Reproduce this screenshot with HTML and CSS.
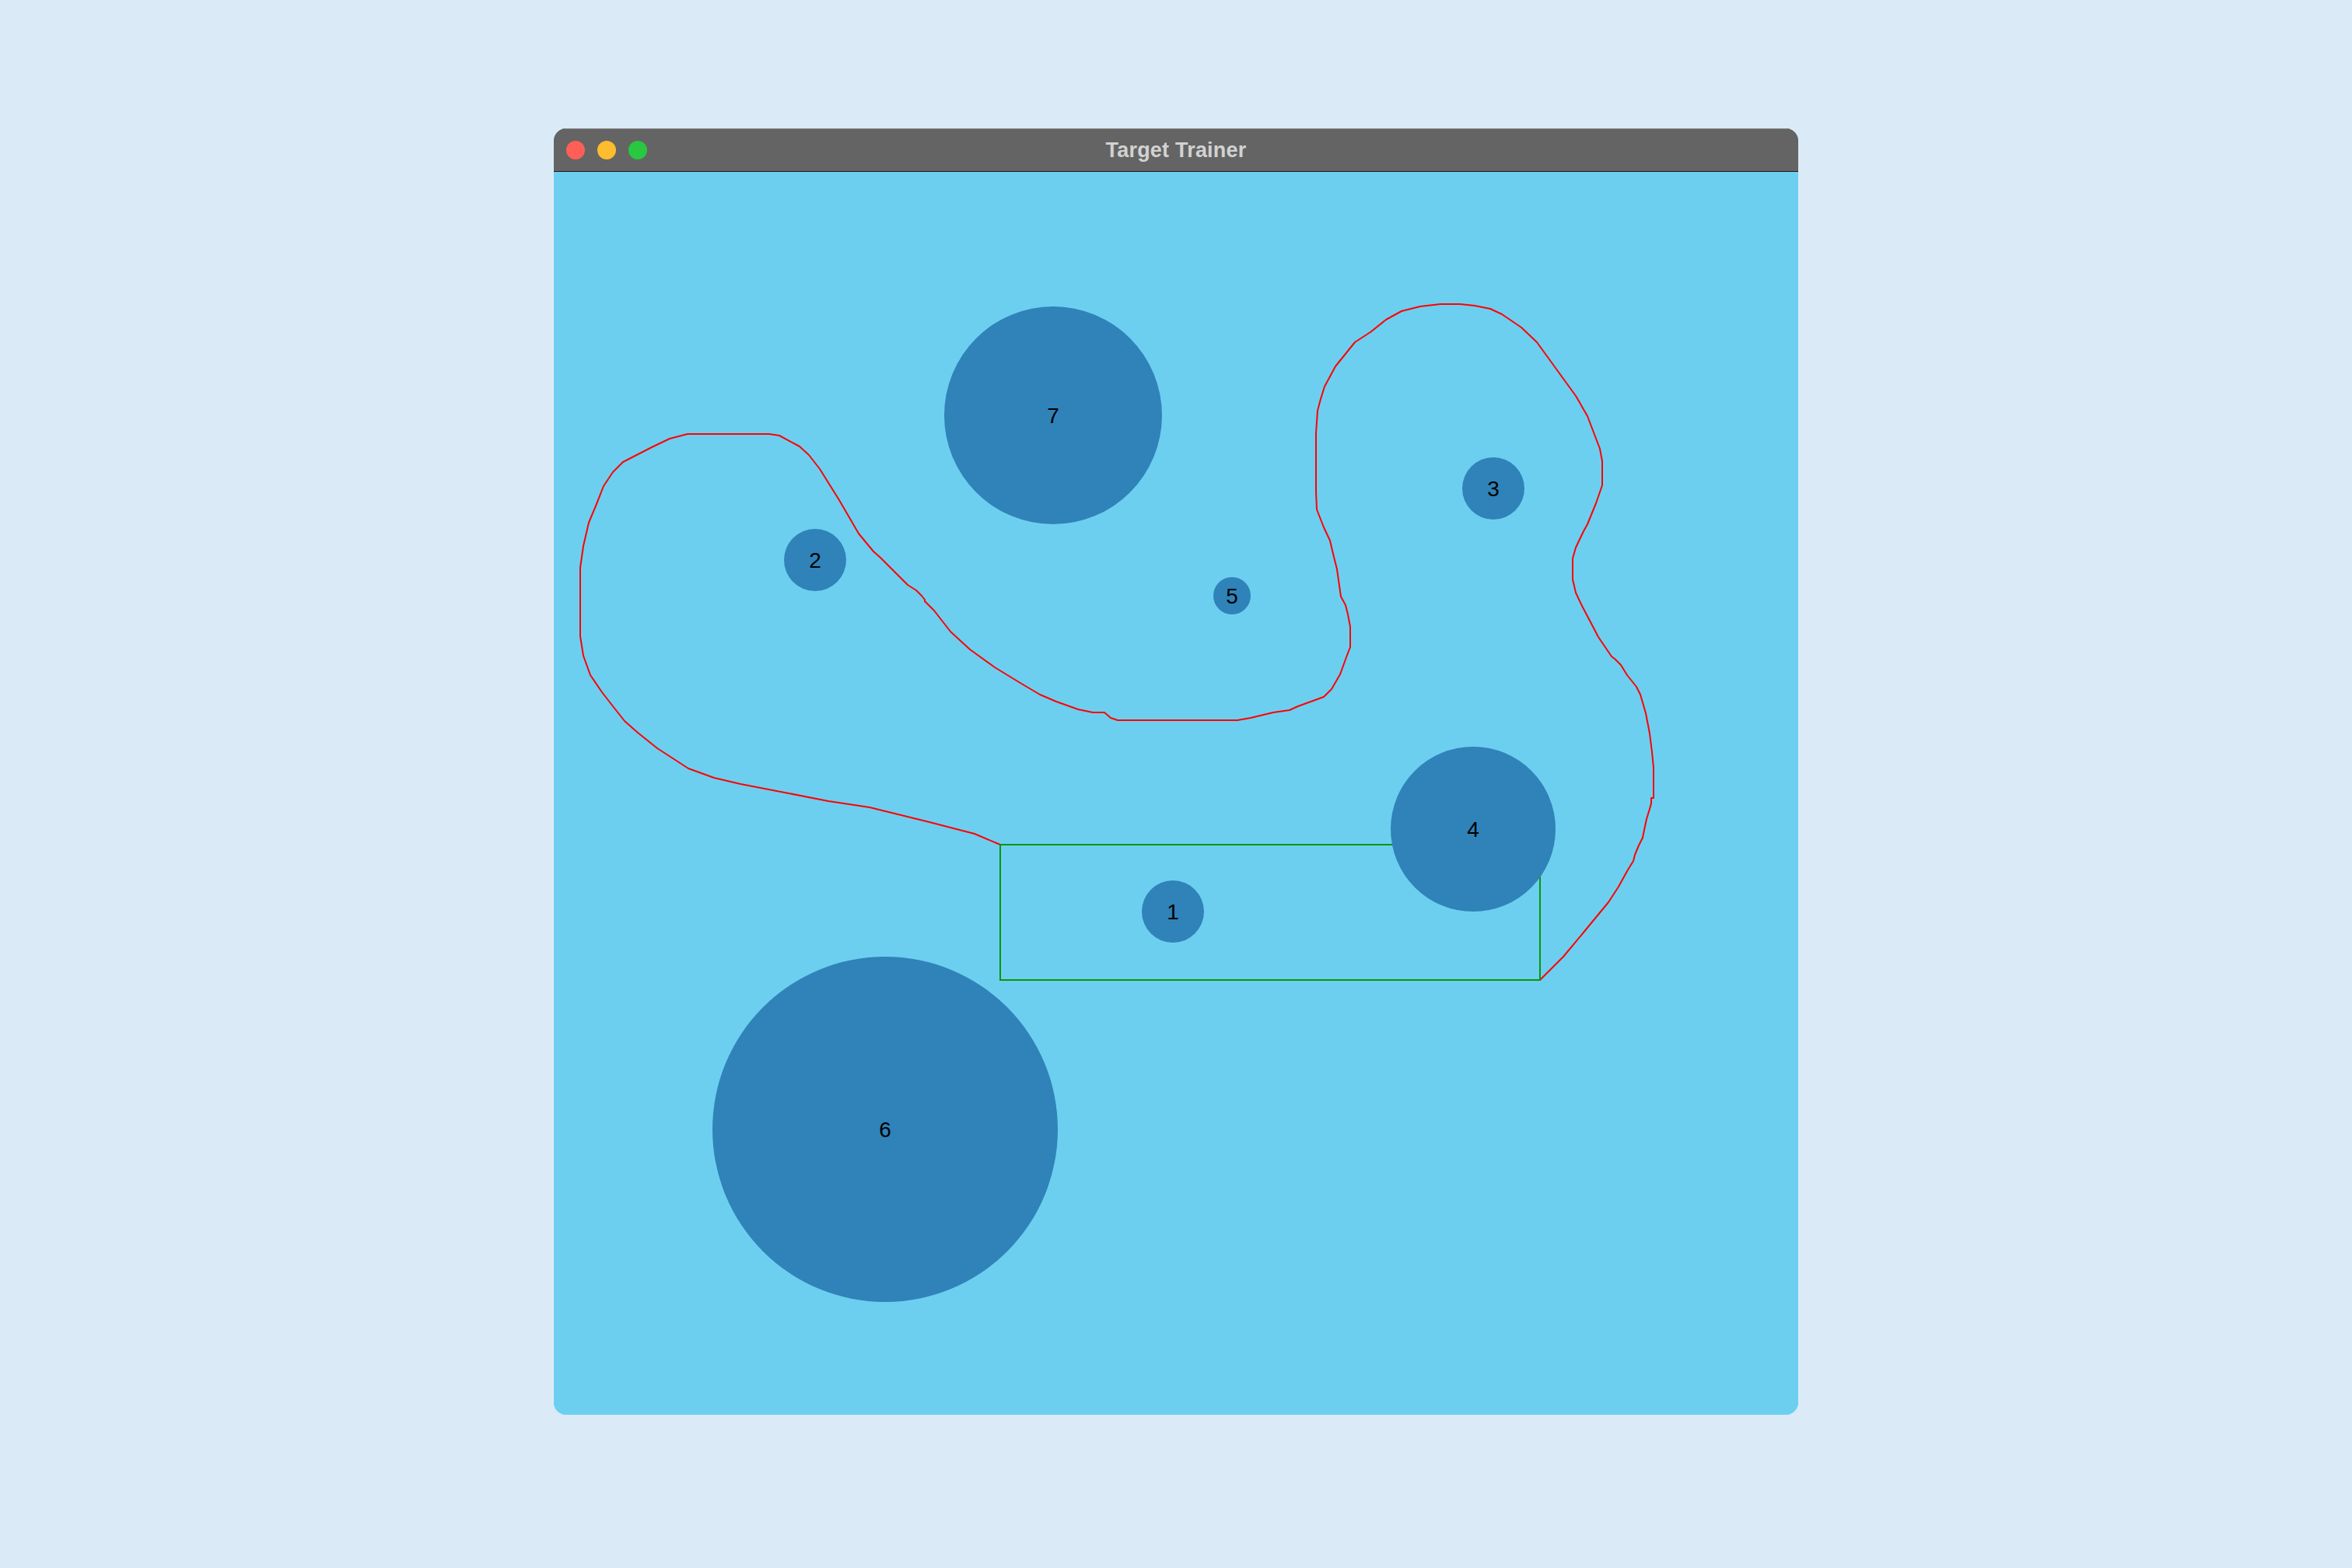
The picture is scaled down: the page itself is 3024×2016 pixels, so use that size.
FILE: index.html
```html
<!DOCTYPE html>
<html lang="en">
<head>
<meta charset="utf-8">
<title>Target Trainer</title>
<link rel="stylesheet" href="styles.css">
</head>
<body>
<div class="window">
  <div class="titlebar">
    <div class="lights">
      <span class="light red"></span>
      <span class="light yellow"></span>
      <span class="light green"></span>
    </div>
    <div class="title">Target Trainer</div>
    <div></div>
  </div>
  <svg class="canvas" width="1600" height="1598" viewBox="713 221 1600 1598" xmlns="http://www.w3.org/2000/svg">
    <polyline class="lasso" points="1287,1086 1254,1072 1196,1057 1119,1038 1066,1030 1015,1020 953,1008 919,1000 886,988 846,962 821,942 804,927 789,908 775,890 760,868 751,843 747,818 747,730 751,702 758,672 768,648 777,625 789,607 802,594 839,575 862,564 885,558 990,558 1003,560 1029,574 1041,585 1055,603 1080,643 1105,686 1124,709 1133,717 1168,752 1179,759 1186,766 1190,771 1190,773 1202,785 1223,812 1248,835 1280,858 1311,877 1338,893 1359,902 1387,912 1406,916 1421,916 1429,923 1438,926 1592,926 1609,923 1638,916 1659,913 1670,908 1703,896 1713,886 1724,867 1732,845 1737,832 1737,806 1734,790 1731,778 1725,767 1720,732 1715,712 1711,695 1703,678 1694,655 1693,632 1693,557 1695,528 1699,513 1704,497 1718,471 1743,440 1763,427 1783,411 1803,400 1827,394 1853,391 1878,391 1897,393 1917,397 1932,404 1957,421 1977,440 2027,509 2042,535 2058,577 2061,593 2061,624 2053,647 2042,674 2037,683 2027,704 2023,718 2023,745 2027,762 2035,779 2045,798 2056,819 2073,844 2077,847 2085,855 2093,868 2105,883 2110,893 2117,917 2122,943 2125,967 2127,987 2127,1026 2124,1026 2124,1033 2122,1040 2118,1053 2115,1067 2113,1077 2108,1087 2103,1099 2101,1107 2093,1120 2082,1140 2069,1160 2036,1200 2011,1230 1981,1260"/>
    <rect class="box" x="1287" y="1086" width="694" height="174"/>
    <g class="target"><circle cx="1509" cy="1172" r="40"/><text x="1509" y="1172">1</text></g>
    <g class="target"><circle cx="1049" cy="720" r="40"/><text x="1049" y="720">2</text></g>
    <g class="target"><circle cx="1921" cy="628" r="40"/><text x="1921" y="628">3</text></g>
    <g class="target"><circle cx="1895" cy="1066" r="106"/><text x="1895" y="1066">4</text></g>
    <g class="target"><circle cx="1585" cy="766" r="24"/><text x="1585" y="766">5</text></g>
    <g class="target"><circle cx="1139" cy="1452" r="222"/><text x="1139" y="1452">6</text></g>
    <g class="target"><circle cx="1355" cy="534" r="140"/><text x="1355" y="534">7</text></g>
  </svg>
</div>
</body>
</html>
```
FILE: styles.css
```css
html, body {
  margin: 0;
  padding: 0;
}

body {
  background: #daebf7;
  min-height: 2016px;
  display: flex;
  justify-content: center;
  align-items: flex-start;
  padding-top: 165px;
  box-sizing: border-box;
  font-family: "Liberation Sans", Arial, sans-serif;
}

.window {
  width: 1600px;
  border-radius: 16px;
  overflow: hidden;
  background: #6dcfef;
  display: flex;
  flex-direction: column;
}

.titlebar {
  height: 55px;
  background: #646464;
  border-top: 1px solid #8a8a8a;
  border-bottom: 1px solid #1c1c1c;
  box-sizing: border-box;
  height: 56px;
  display: grid;
  grid-template-columns: 1fr auto 1fr;
  align-items: center;
}

.lights {
  display: flex;
  gap: 16px;
  padding-left: 16px;
}

.light {
  width: 24px;
  height: 24px;
  border-radius: 50%;
  display: block;
}

.light.red { background: #ff5f57; }
.light.yellow { background: #febc2e; }
.light.green { background: #28c840; }

.title {
  color: #d2d2d2;
  font-weight: bold;
  font-size: 27px;
  letter-spacing: 0.2px;
}

.canvas {
  display: block;
  background: #6dcfef;
}

.lasso {
  fill: none;
  stroke: #ff0000;
  stroke-width: 2;
  stroke-linejoin: round;
}

.box {
  fill: none;
  stroke: #0b960b;
  stroke-width: 2;
}

.target circle {
  fill: #2f83b9;
}

.target text {
  font-family: "Liberation Sans", Arial, sans-serif;
  font-size: 28px;
  fill: #000000;
  text-anchor: middle;
  dominant-baseline: central;
}
```
